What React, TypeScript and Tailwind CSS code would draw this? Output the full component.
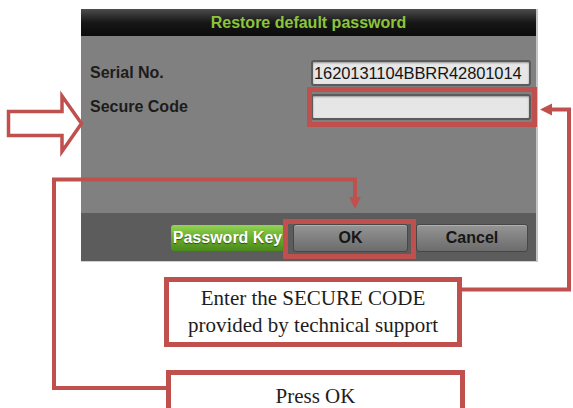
import type { ReactNode } from "react"

const RED = "#c0504d"

function Field({ label, value }: { label: string; value?: string }) {
  return (
    <div className="flex items-center justify-between">
      <span className="text-[16px] font-bold text-[#1c1c1c]">{label}</span>
      <div className="flex h-[26px] w-[220px] items-center overflow-hidden rounded-[3px] border-2 border-[#5b5b5b] bg-[#e6e6e6] pl-[1px] shadow-[inset_0_1px_2px_rgba(0,0,0,0.35)]">
        <span className="whitespace-nowrap text-[16.5px] leading-none tracking-[-0.1px] text-[#141414]">{value}</span>
      </div>
    </div>
  )
}

function GrayButton({ children, w }: { children: ReactNode; w: string }) {
  return (
    <button
      className={`flex h-[28px] ${w} items-center justify-center rounded-[3px] border border-[#474747] bg-gradient-to-b from-[#959595] to-[#6c6c6c] text-[16px] font-bold text-[#161616] shadow-[inset_0_1px_0_rgba(255,255,255,0.25)]`}
    >
      {children}
    </button>
  )
}

function Callout({ children, className }: { children: ReactNode; className: string }) {
  return (
    <div
      className={`flex flex-col items-center border-[5px] border-[#c0504d] bg-white font-['Liberation_Serif','Times_New_Roman',serif] text-[21px] leading-[27px] text-[#1d1d1d] ${className}`}
    >
      {children}
    </div>
  )
}

export default function App() {
  return (
    <div className="relative h-[408px] w-[573px] overflow-hidden bg-white font-['Liberation_Sans',Arial,sans-serif]">
      {/* restore password dialog */}
      <div className="ml-[81px] mt-[9px] w-[457px] border-r-2 border-[#c4c4c4]">
        <div className="flex h-[27px] items-center justify-center bg-gradient-to-b from-[#4d4d4d] via-[#171717] to-[#0b0b0b]">
          <span className="text-[16px] font-bold text-[#8cc43c]">Restore default password</span>
        </div>
        <div className="flex h-[177px] flex-col gap-[8px] bg-[#808080] pl-[9px] pr-[5px] pt-[24px]">
          <Field label="Serial No." value="1620131104BBRR42801014" />
          <Field label="Secure Code" />
        </div>
        <div className="flex h-[49px] items-center justify-end gap-[8px] border-b border-[#cfcfcf] bg-[#5c5c5c] pr-[8px] pt-[2px]">
          <button className="mr-[1px] flex h-[26px] w-[113px] items-center justify-center overflow-hidden whitespace-nowrap rounded-[3px] bg-gradient-to-b from-[#92d454] via-[#69ad2c] to-[#4a8a1c] text-[16px] font-bold text-white [text-shadow:0_1px_1px_rgba(0,0,0,0.5)]">
            Password Key
          </button>
          <GrayButton w="w-[115px]">OK</GrayButton>
          <GrayButton w="w-[112px]">Cancel</GrayButton>
        </div>
      </div>

      {/* instruction callouts */}
      <Callout className="ml-[164px] mt-[15px] h-[70px] w-[298px] justify-center">
        <span>Enter the SECURE CODE</span>
        <span>provided by technical support</span>
      </Callout>
      <Callout className="ml-[166px] mt-[23px] h-[60px] w-[299px] pt-[8px]">
        <span>Press OK</span>
      </Callout>

      {/* red markers and connector lines */}
      <svg className="pointer-events-none absolute inset-0" width={573} height={408} viewBox="0 0 573 408">
        <polygon
          points="8.5,111.5 62,111.5 62,96 81.5,123.5 62,151.5 62,135.5 8.5,135.5"
          fill="white"
          stroke={RED}
          strokeWidth={3.5}
        />
        <rect x={309.5} y={89.5} width={225} height={35} fill="none" stroke={RED} strokeWidth={5} />
        <rect x={285.5} y={221.5} width={128} height={35} fill="none" stroke={RED} strokeWidth={5} />
        <polyline points="166,388 54,388 54,179.5 355,179.5 355,199" fill="none" stroke={RED} strokeWidth={4} />
        <polygon points="349,197 361,197 355,209" fill={RED} />
        <polyline points="550,109.5 569,109.5 569,289.5 462,289.5" fill="none" stroke={RED} strokeWidth={4} />
        <polygon points="540,109.5 552,103.5 552,115.5" fill={RED} />
      </svg>
    </div>
  )
}
